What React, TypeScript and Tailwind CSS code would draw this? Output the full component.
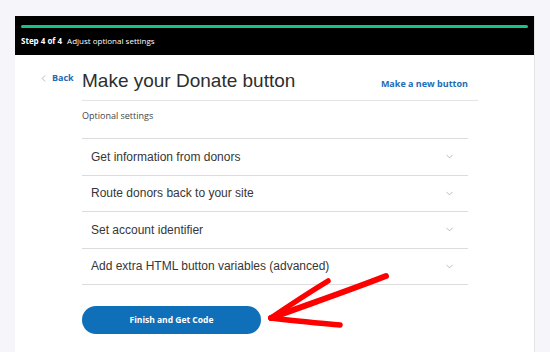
import { ChevronDown, ChevronLeft } from 'lucide-react';

const OPTIONS = [
  'Get information from donors',
  'Route donors back to your site',
  'Set account identifier',
  'Add extra HTML button variables (advanced)',
];

const bold = { fontFamily: '"Open Sans", "Noto Sans", sans-serif' };

export default function App() {
  return (
    <div className="relative h-[352px] w-[550px] overflow-hidden bg-[#f5f5fa] pt-[16px] pl-[15px]">
      <div className="h-[400px] w-[520px] border-r border-[#e3e3e8] bg-white">
        {/* Step header */}
        <div className="h-[39px] bg-black px-[6px] pt-[9px]">
          <div className="h-[3px] w-full rounded-full bg-[#17c384]" />
          <div className="mt-[8px] flex items-center gap-[5px] text-[8px] leading-[10px] text-white" style={bold}>
            <span className="font-bold">Step 4 of 4</span>
            <span>Adjust optional settings</span>
          </div>
        </div>

        {/* Body */}
        <div className="flex pt-[10px] pl-[23px]" style={{ fontFamily: '"Liberation Sans", Arial, sans-serif' }}>
          <div className="flex h-[28px] w-[44px] items-center gap-[3px] pb-[2px]">
            <ChevronLeft size={11} strokeWidth={1.3} className="text-[#8a8a8a]" />
            <span className="text-[9px] font-bold text-[#1d6cb5]" style={bold}>Back</span>
          </div>

          <div className="w-[396px]">
            <div className="flex h-[30px] w-[386px] items-center justify-between">
              <h1 className="pt-[2px] text-[19px] leading-[28px] text-[#2c2e2f]">Make your Donate button</h1>
              <span className="pt-[8px] text-[9px] font-bold text-[#1d6cb5]" style={bold}>Make a new button</span>
            </div>
            <div className="mt-[5px] h-px w-[396px] bg-[#e4e4e4]" />
            <div className="mt-[8px] text-[9px] leading-[14px] text-[#444]" style={bold}>Optional settings</div>

            <div className="mt-[15px] w-[386px] border-t border-[#dcdcdc]">
              {OPTIONS.map((o) => (
                <div key={o} className="flex h-[36.5px] items-center justify-between border-b border-[#dcdcdc] pr-[13px] pl-[9px]">
                  <span className="text-[12px] text-[#363636]">{o}</span>
                  <ChevronDown size={11} strokeWidth={1.3} className="text-[#8f8f8f]" />
                </div>
              ))}
            </div>

            <button
              className="mt-[21px] flex h-[28px] w-[179px] items-center justify-center rounded-full bg-[#0f6fb9] text-[8.5px] font-bold text-white"
              style={bold}
            >
              Finish and Get Code
            </button>
          </div>
        </div>
      </div>

      {/* Red hand-drawn arrow */}
      <svg className="absolute left-0 top-0" width="550" height="352" viewBox="0 0 550 352">
        <g fill="none" stroke="#ff0000" strokeLinecap="round" strokeLinejoin="round">
          <path d="M386 276 C350 290 315 302 271 318" strokeWidth="6" />
          <path d="M328 281 C310 292 290 305 271 318" strokeWidth="5.5" />
          <path d="M271 318 C295 321 318 323 340 325" strokeWidth="5.5" />
        </g>
      </svg>
    </div>
  );
}
